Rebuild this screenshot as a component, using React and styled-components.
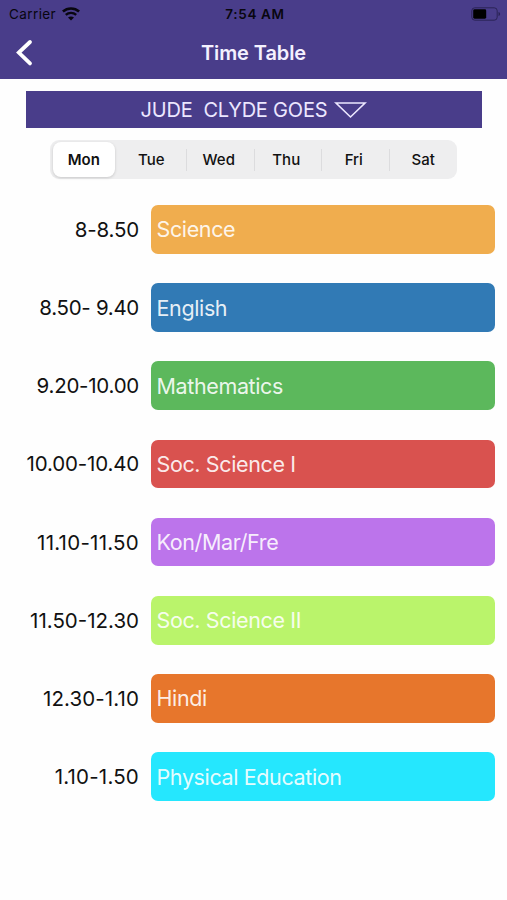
import React, { useState } from 'react';
import styled, { createGlobalStyle } from 'styled-components';

const GlobalStyle = createGlobalStyle`
  * {
    box-sizing: border-box;
  }

  body {
    margin: 0;
    background-color: #fefefe;
    font-family: Inter, 'Liberation Sans', sans-serif;
    color: #111;
  }
`;

const Screen = styled.div`
  display: flex;
  flex-direction: column;
  width: 100%;
  height: 900px;
  overflow: hidden;
`;

const Header = styled.header`
  height: 79px;
  background-color: #493d8a;
`;

const StatusBar = styled.div`
  display: grid;
  grid-template-columns: 1fr auto 1fr;
  align-items: center;
  height: 27px;
  padding: 0 6px 0 9px;
  font-size: 13.5px;
  color: #08060f;
`;

const Carrier = styled.div`
  display: flex;
  align-items: center;
  gap: 6px;
  letter-spacing: 0.4px;
`;

const Clock = styled.div`
  font-size: 13.5px;
  font-weight: 600;
  letter-spacing: 0.65px;
`;

const Battery = styled.svg`
  justify-self: end;
`;

const NavBar = styled.div`
  display: grid;
  grid-template-columns: 1fr auto 1fr;
  align-items: center;
  height: 51px;
  padding: 0 16px;
`;

const BackButton = styled.button`
  display: flex;
  width: 18px;
  padding: 0;
  border: none;
  background: none;
`;

const Title = styled.h1`
  margin: 0;
  font-size: 20px;
  font-weight: 600;
  letter-spacing: -0.1px;
  color: #f4f1ff;
`;

const StudentPicker = styled.button`
  display: flex;
  justify-content: center;
  align-items: center;
  gap: 7px;
  height: 37px;
  margin: 12px 25px 0 26px;
  padding: 1px 0 0;
  border: none;
  background-color: #493d8a;
  font-family: inherit;
  font-size: 20px;
  letter-spacing: -0.2px;
  white-space: pre;
  color: #ece7ff;
`;

const DayTabs = styled.div`
  display: grid;
  grid-template-columns: repeat(6, 1fr);
  height: 39px;
  margin: 12px 50px 0 50px;
  padding: 2px 0 2px 2px;
  border-radius: 9px;
  background-color: #eeeeef;
`;

const DayTab = styled.button`
  display: flex;
  justify-content: center;
  align-items: center;
  margin: 0 5px 0 1px;
  padding: 0;
  border: none;
  border-radius: 8px;
  background-color: ${(props) => (props.$active ? '#fff' : 'transparent')};
  box-shadow: ${(props) =>
    props.$active ? '0 1px 3px rgba(0, 0, 0, 0.16)' : 'none'};
  font-family: inherit;
  font-size: 15px;
  font-weight: ${(props) => (props.$active ? 600 : 500)};
  color: #111;
`;

const DayCell = styled.div`
  display: grid;
  background: ${(props) =>
    props.$divider
      ? 'linear-gradient(#dcdcde, #dcdcde) right center / 1px 22px no-repeat'
      : 'none'};

  &:last-child ${DayTab} {
    margin: 0 1px;
  }
`;

const Schedule = styled.div`
  display: flex;
  flex-direction: column;
  gap: 29.5px;
  margin-top: 26px;
`;

const Row = styled.div`
  display: grid;
  grid-template-columns: 139px 1fr;
  column-gap: 12px;
  align-items: center;
  padding-right: 12.5px;
`;

const Time = styled.div`
  text-align: right;
  font-size: 20.5px;
  letter-spacing: ${(props) => props.$tracking}px;
  white-space: nowrap;
`;

const Subject = styled.div`
  display: flex;
  align-items: center;
  height: 48.7px;
  padding-left: 5.5px;
  border-radius: 7px;
  background-color: ${(props) => props.$color};
  font-size: 21.5px;
  letter-spacing: -0.37px;
  color: rgba(255, 255, 255, 0.9);
`;

const days = ['Mon', 'Tue', 'Wed', 'Thu', 'Fri', 'Sat'];

const lessons = [
  { time: '8-8.50', subject: 'Science', color: '#f0ad4e', tracking: -0.2 },
  { time: '8.50- 9.40', subject: 'English', color: '#317ab5', tracking: -0.3 },
  { time: '9.20-10.00', subject: 'Mathematics', color: '#5cb85c', tracking: -0.25 },
  { time: '10.00-10.40', subject: 'Soc. Science I', color: '#d9524f', tracking: -0.17 },
  { time: '11.10-11.50', subject: 'Kon/Mar/Fre', color: '#bc74eb', tracking: 0.25 },
  { time: '11.50-12.30', subject: 'Soc. Science II', color: '#baf46b', tracking: 0 },
  { time: '12.30-1.10', subject: 'Hindi', color: '#e7762c', tracking: 0.1 },
  { time: '1.10-1.50', subject: 'Physical Education', color: '#25e7fe', tracking: 0.2 },
];

const WifiIcon = () => (
  <svg width="18" height="14" viewBox="0 0 18 14" fill="none">
    <path d="M.9 4.5C5.5.4 12.5.4 17.1 4.5" stroke="#08060f" strokeWidth="2.6" />
    <path d="M3.8 7.9c3-2.7 7.4-2.7 10.4 0" stroke="#08060f" strokeWidth="2.4" />
    <path d="M9 13.6 6 10.6c1.7-1.5 4.3-1.5 6 0z" fill="#08060f" />
  </svg>
);

const BatteryIcon = () => (
  <Battery width="30" height="14" viewBox="0 0 30 14" fill="none">
    <rect x=".8" y=".8" width="25.4" height="12.4" rx="3" stroke="#2b2356" />
    <rect x="2.2" y="2.3" width="13" height="9.4" rx="1.4" fill="#000" />
    <path d="M27.5 5v4c1-.3 1.6-1.1 1.6-2s-.6-1.7-1.6-2z" fill="#2b2356" />
  </Battery>
);

const TimeTable = () => {
  const [day, setDay] = useState('Mon');

  return (
    <Screen>
      <Header>
        <StatusBar>
          <Carrier>
            Carrier
            <WifiIcon />
          </Carrier>
          <Clock>7:54 AM</Clock>
          <BatteryIcon />
        </StatusBar>
        <NavBar>
          <BackButton aria-label="Back">
            <svg width="18" height="28" viewBox="0 0 18 28" fill="none">
              <path
                d="M14 3 2.8 13.5 14 24.4"
                stroke="#fff"
                strokeWidth="3.8"
                strokeLinecap="round"
              />
            </svg>
          </BackButton>
          <Title>Time Table</Title>
        </NavBar>
      </Header>
      <StudentPicker>
        {'JUDE  CLYDE GOES'}
        <svg width="33" height="18" viewBox="0 0 33 18" fill="none">
          <path d="M2 2h29L16.5 16z" stroke="#ece7ff" strokeWidth="1.6" />
        </svg>
      </StudentPicker>
      <DayTabs>
        {days.map((name, i) => (
          <DayCell key={name} $divider={i > 0 && i < days.length - 1}>
            <DayTab $active={name === day} onClick={() => setDay(name)}>
              {name}
            </DayTab>
          </DayCell>
        ))}
      </DayTabs>
      <Schedule>
        {lessons.map((lesson) => (
          <Row key={lesson.time}>
            <Time $tracking={lesson.tracking}>{lesson.time}</Time>
            <Subject $color={lesson.color}>{lesson.subject}</Subject>
          </Row>
        ))}
      </Schedule>
    </Screen>
  );
};

const App = () => (
  <>
    <GlobalStyle />
    <TimeTable />
  </>
);

export default App;
